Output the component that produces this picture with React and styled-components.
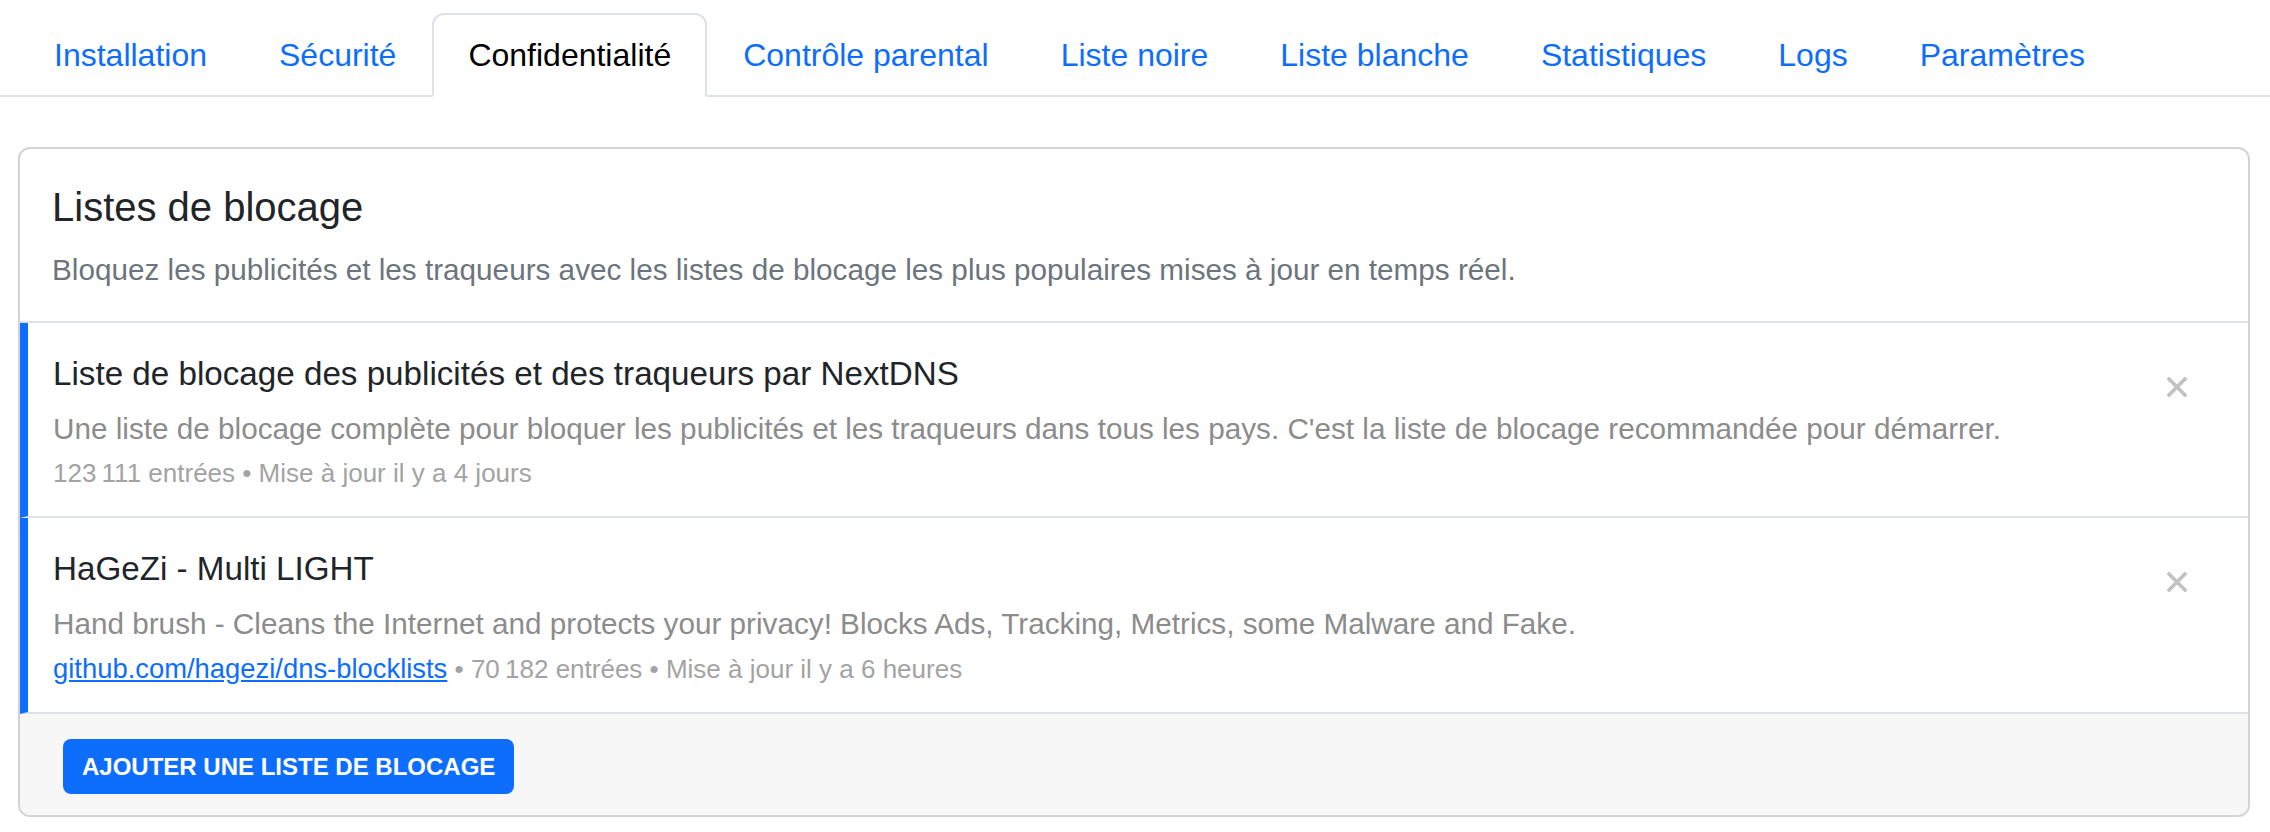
import React from 'react'
import styled, { createGlobalStyle } from 'styled-components'

const GlobalStyle = createGlobalStyle`
  body {
    margin: 0;
    background: #fff;
    font-family: "Liberation Sans", Arial, sans-serif;
    color: #212529;
  }
`

const tabs = [
  'Installation',
  'Sécurité',
  'Confidentialité',
  'Contrôle parental',
  'Liste noire',
  'Liste blanche',
  'Statistiques',
  'Logs',
  'Paramètres',
]

const lists = [
  {
    id: 'nextdns',
    name: 'Liste de blocage des publicités et des traqueurs par NextDNS',
    description:
      "Une liste de blocage complète pour bloquer les publicités et les traqueurs dans tous les pays. C'est la liste de blocage recommandée pour démarrer.",
    entries: '123\u202F111',
    updated: 'il y a 4 jours',
  },
  {
    id: 'hagezi',
    name: 'HaGeZi - Multi LIGHT',
    description:
      'Hand brush - Cleans the Internet and protects your privacy! Blocks Ads, Tracking, Metrics, some Malware and Fake.',
    link: 'github.com/hagezi/dns-blocklists',
    entries: '70\u202F182',
    updated: 'il y a 6 heures',
  },
]

const CloseIcon = () => (
  <svg width="22" height="20" viewBox="0 0 22 20">
    <path d="M3 2 L19 18 M19 2 L3 18" stroke="#c2c2c2" strokeWidth="3.8" strokeLinecap="round" />
  </svg>
)

const App = () => {
  return (
    <>
      <GlobalStyle />
      <Nav>
        {tabs.map(t => (
          <Tab key={t} $active={t === 'Confidentialité'}>{t}</Tab>
        ))}
      </Nav>

      <Card>
        <Header>
          <Title>Listes de blocage</Title>
          <Lead>
            Bloquez les publicités et les traqueurs avec les listes de blocage les plus populaires mises à jour en temps réel.
          </Lead>
        </Header>

        {lists.map(l => (
          <Item key={l.id}>
            <ItemBody>
              <ItemTitle>{l.name}</ItemTitle>
              <ItemDesc>{l.description}</ItemDesc>
              <Meta>
                {l.link && <><MetaLink href="#">{l.link}</MetaLink>{' • '}</>}
                {l.entries} entrées • Mise à jour {l.updated}
              </Meta>
            </ItemBody>
            <RemoveBtn aria-label="Supprimer"><CloseIcon /></RemoveBtn>
          </Item>
        ))}

        <Footer>
          <AddButton>Ajouter une liste de blocage</AddButton>
        </Footer>
      </Card>
    </>
  )
}

export default App

const Nav = styled.nav`
  display: flex;
  padding: 13px 0 0 18px;
  border-bottom: 2px solid #dee2e6;
`

const Tab = styled.a`
  padding: 16px 34px;
  font-size: 32px;
  line-height: 48px;
  color: ${p => (p.$active ? '#000' : '#0d6efd')};
  border: 2px solid ${p => (p.$active ? '#dee2e6' : 'transparent')};
  border-bottom-color: ${p => (p.$active ? '#fff' : 'transparent')};
  border-radius: 12px 12px 0 0;
  margin-bottom: -2px;
  background: ${p => (p.$active ? '#fff' : 'transparent')};
  cursor: pointer;
`

const Card = styled.section`
  margin: 50px 20px 0 18px;
  border: 2px solid #d3d3d3;
  border-radius: 12px;
  overflow: hidden;
`

const Header = styled.header`
  padding: 34px 32px 29px;
  border-bottom: 2px solid #dee2e6;
`

const Title = styled.h5`
  margin: 0 0 16px;
  font-size: 40px;
  line-height: 48px;
  font-weight: 500;
  color: #212529;
`

const Lead = styled.p`
  margin: 0;
  font-size: 29.7px;
  line-height: 45px;
  color: #6c757d;
`

const Item = styled.div`
  display: flex;
  align-items: flex-start;
  padding: 27px 60px 23px 25px;
  border-left: 8px solid #0d6efd;
  border-bottom: 2px solid #dee2e6;
`

const ItemBody = styled.div`
  flex: 1;
  display: flex;
  flex-direction: column;
`

const ItemTitle = styled.div`
  margin-bottom: 8px;
  font-size: 33.2px;
  line-height: 48px;
  font-weight: 500;
  color: #212529;
`

const ItemDesc = styled.div`
  font-size: 29.7px;
  line-height: 45px;
  color: #8c8c8c;
`

const Meta = styled.div`
  margin-top: 3px;
  font-size: 26px;
  line-height: 39px;
  color: #a3a3a3;
`

const MetaLink = styled.a`
  font-size: 27.4px;
  color: #0d6efd;
  text-decoration: underline;
`

const RemoveBtn = styled.button`
  border: 0;
  background: none;
  padding: 0;
  margin-top: 27px;
  display: flex;
  cursor: pointer;
`

const Footer = styled.footer`
  background: #f7f7f7;
  padding: 25px 40px 21px 43px;
`

const AddButton = styled.button`
  border: 0;
  border-radius: 8px;
  background: #0d6efd;
  color: #fff;
  font-family: "Liberation Sans", Arial, sans-serif;
  font-weight: 700;
  font-size: 24px;
  text-transform: uppercase;
  height: 55px;
  padding: 0 19px;
  cursor: pointer;
`
